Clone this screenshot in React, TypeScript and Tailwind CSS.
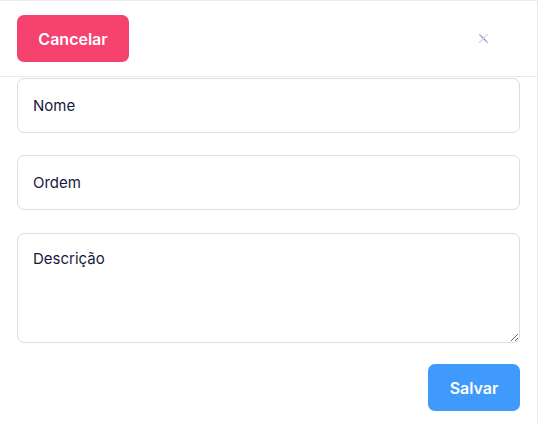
import React from 'react';

const fields = [
  { id: 'nome', label: 'Nome' },
  { id: 'ordem', label: 'Ordem' },
];

export default function App() {
  return (
    <div className="w-[538px] h-[423px] bg-white border-t border-r border-[#e9e9ef] font-['Inter',sans-serif]">
      {/* header */}
      <div className="h-[76px] border-b border-[#e9e9ef] flex items-center justify-between pl-[17px] pr-[48px]">
        <button className="w-[112px] h-[47px] rounded-[7px] bg-[#f5426f] text-white text-[16px] font-semibold">
          Cancelar
        </button>
        <svg width="11" height="11" viewBox="0 0 11 11">
          <defs>
            <linearGradient id="xg" x1="0" y1="0" x2="1" y2="1">
              <stop offset="0" stopColor="#c7cbe6" />
              <stop offset="0.5" stopColor="#6f86b8" />
              <stop offset="1" stopColor="#c7cbe6" />
            </linearGradient>
          </defs>
          <path d="M1 1 L10 10" stroke="url(#xg)" strokeWidth="1.4" />
          <path d="M10 1 L1 10" stroke="#d3d6ea" strokeWidth="1.2" />
        </svg>
      </div>

      {/* form */}
      <div className="px-[17px] pt-px flex flex-col gap-[22px]">
        {fields.map((f) => (
          <input
            key={f.id}
            placeholder={f.label}
            className="h-[55px] w-full rounded-[7px] border border-[#dcdbe8] px-[15px] text-[15px] text-[#1c1f3a] placeholder:text-[#161a3b] outline-none"
          />
        ))}
        <textarea
          placeholder="Descrição"
          className="mt-px h-[110px] w-full rounded-[7px] border border-[#dcdbe8] px-[15px] pt-[14px] text-[15px] text-[#1c1f3a] placeholder:text-[#161a3b] outline-none"
        />
        <div className="-mt-px flex justify-end">
          <button className="w-[92px] h-[47px] rounded-[7px] bg-[#3f9afc] text-white text-[16px] font-semibold">
            Salvar
          </button>
        </div>
      </div>
    </div>
  );
}
